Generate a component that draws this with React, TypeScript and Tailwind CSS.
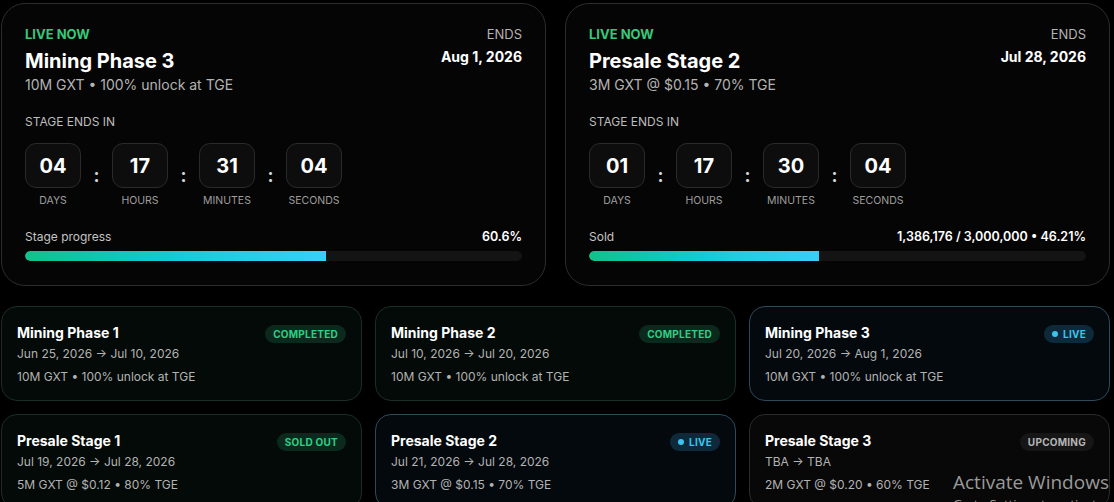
import React from "react";

type Unit = { value: string; label: string };

interface LiveCardProps {
  title: string;
  subtitle: string;
  ends: string;
  countdown: Unit[];
  progressLabel: string;
  progressValue: string;
  percent: number;
}

interface StageCardProps {
  title: string;
  dates: string;
  info: string;
  status: "completed" | "soldout" | "live" | "upcoming";
}

const liveCards: LiveCardProps[] = [
  {
    title: "Mining Phase 3",
    subtitle: "10M GXT • 100% unlock at TGE",
    ends: "Aug 1, 2026",
    countdown: [
      { value: "04", label: "Days" },
      { value: "17", label: "Hours" },
      { value: "31", label: "Minutes" },
      { value: "04", label: "Seconds" },
    ],
    progressLabel: "Stage progress",
    progressValue: "60.6%",
    percent: 60.6,
  },
  {
    title: "Presale Stage 2",
    subtitle: "3M GXT @ $0.15 • 70% TGE",
    ends: "Jul 28, 2026",
    countdown: [
      { value: "01", label: "Days" },
      { value: "17", label: "Hours" },
      { value: "30", label: "Minutes" },
      { value: "04", label: "Seconds" },
    ],
    progressLabel: "Sold",
    progressValue: "1,386,176 / 3,000,000 • 46.21%",
    percent: 46.21,
  },
];

const stages: StageCardProps[] = [
  { title: "Mining Phase 1", dates: "Jun 25, 2026 → Jul 10, 2026", info: "10M GXT • 100% unlock at TGE", status: "completed" },
  { title: "Mining Phase 2", dates: "Jul 10, 2026 → Jul 20, 2026", info: "10M GXT • 100% unlock at TGE", status: "completed" },
  { title: "Mining Phase 3", dates: "Jul 20, 2026 → Aug 1, 2026", info: "10M GXT • 100% unlock at TGE", status: "live" },
  { title: "Presale Stage 1", dates: "Jul 19, 2026 → Jul 28, 2026", info: "5M GXT @ $0.12 • 80% TGE", status: "soldout" },
  { title: "Presale Stage 2", dates: "Jul 21, 2026 → Jul 28, 2026", info: "3M GXT @ $0.15 • 70% TGE", status: "live" },
  { title: "Presale Stage 3", dates: "TBA → TBA", info: "2M GXT @ $0.20 • 60% TGE", status: "upcoming" },
];

function LiveCard({ title, subtitle, ends, countdown, progressLabel, progressValue, percent }: LiveCardProps) {
  return (
    <div className="rounded-[24px] border border-[#2c2c2c] bg-[#050505] px-[23px] pt-[21px] pb-[24px]">
      {/* header */}
      <div className="flex justify-between">
        <div>
          <div className="text-[13px] leading-[18px] font-bold text-[#35c97c] uppercase">Live now</div>
          <div className="mt-[5px] text-[20px] leading-[26px] font-bold text-white">{title}</div>
          <div className="mt-px text-[14px] leading-[20px] text-[#b3b3b3]">{subtitle}</div>
        </div>
        <div className="text-right">
          <div className="text-[13px] leading-[18px] text-[#b3b3b3] uppercase">Ends</div>
          <div className="mt-1 text-[14px] leading-[20px] font-bold text-white">{ends}</div>
        </div>
      </div>

      <div className="mt-[18px] text-[12px] leading-[18px] text-[#bdbdbd] uppercase">Stage ends in</div>

      {/* countdown */}
      <div className="mt-3 flex items-center">
        {countdown.map((u, i) => (
          <React.Fragment key={u.label}>
            {i > 0 && (
              <div className="w-[31px] text-center text-[18px] font-bold text-[#d4d4d4]">:</div>
            )}
            <div className="flex flex-col items-center">
              <div className="flex h-[45px] w-[56px] items-center justify-center rounded-[11px] border border-[#2a2a2a] bg-[#0d0d0d] text-[20px] font-bold text-white">
                {u.value}
              </div>
              <div className="mt-[6px] text-[10.5px] leading-[14px] text-[#9e9e9e] uppercase">{u.label}</div>
            </div>
          </React.Fragment>
        ))}
      </div>

      {/* progress */}
      <div className="mt-5 flex items-baseline justify-between leading-[18px]">
        <span className="text-[12px] text-[#c4c4c4]">{progressLabel}</span>
        <span className="text-[12.5px] font-semibold text-white">{progressValue}</span>
      </div>
      <div className="mt-[5px] h-[10px] w-full overflow-hidden rounded-full bg-[#141414]">
        <div
          className="h-full rounded-l-full bg-gradient-to-r from-[#12c18b] via-[#14cbd6] to-[#37cff8]"
          style={{ width: `${percent}%` }}
        />
      </div>
    </div>
  );
}

const cardTone: Record<StageCardProps["status"], string> = {
  completed: "border-[#1b2e25] bg-[#030a07]",
  soldout: "border-[#1b2e25] bg-[#030a07]",
  live: "border-[#2c4a5a] bg-[#04090d]",
  upcoming: "border-[#2a2a2a] bg-[#080808]",
};

function Badge({ status }: { status: StageCardProps["status"] }) {
  if (status === "live") {
    return (
      <span className="mt-[2px] flex h-[18px] items-center gap-[5px] rounded-full bg-[#0e2a3a] px-2 text-[10px] font-bold tracking-wide text-[#3cc3f0]">
        <span className="h-[6px] w-[6px] rounded-full bg-[#3cc3f0]" />
        LIVE
      </span>
    );
  }
  const map = {
    completed: { text: "COMPLETED", cls: "bg-[#0b2a1d] text-[#2fcf85]" },
    soldout: { text: "SOLD OUT", cls: "bg-[#0b2a1d] text-[#2fcf85]" },
    upcoming: { text: "UPCOMING", cls: "bg-[#161616] text-[#b5b5b5]" },
  } as const;
  const b = map[status];
  return (
    <span className={`mt-[2px] flex h-[18px] items-center rounded-full px-2 text-[10px] font-bold tracking-wide ${b.cls}`}>
      {b.text}
    </span>
  );
}

function StageCard({ title, dates, info, status }: StageCardProps) {
  return (
    <div className={`h-[95px] rounded-[16px] border px-[15px] pt-4 ${cardTone[status]}`}>
      <div className="flex items-start justify-between">
        <div className="text-[14px] leading-[20px] font-bold text-white">{title}</div>
        <Badge status={status} />
      </div>
      <div className="mt-0.5 text-[12px] leading-[18px] text-[#b3b3b3]">{dates}</div>
      <div className="mt-[5px] text-[12px] leading-[18px] text-[#b3b3b3]">{info}</div>
    </div>
  );
}

export default function App() {
  return (
    <div className="relative h-[502px] w-[1114px] overflow-hidden bg-black font-['Inter',sans-serif]">
      <div className="ml-px w-[1109px] pt-[3px]">
        <div className="grid grid-cols-2 gap-[19px]">
          {liveCards.map((c) => (
            <LiveCard key={c.title} {...c} />
          ))}
        </div>

        <div className="mt-5 grid grid-cols-3 gap-x-[13px] gap-y-[13px]">
          {stages.map((s) => (
            <StageCard key={s.title} {...s} />
          ))}
        </div>
      </div>

      {/* OS watermark overlay */}
      <div className="pointer-events-none absolute left-[953px] top-[469px] font-['Open_Sans',sans-serif] text-[#9a9a9a]">
        <div className="text-[19px] leading-[26px]">Activate Windows</div>
        <div className="text-[13px] leading-[18px]">Go to Settings to activate Windows.</div>
      </div>
    </div>
  );
}
